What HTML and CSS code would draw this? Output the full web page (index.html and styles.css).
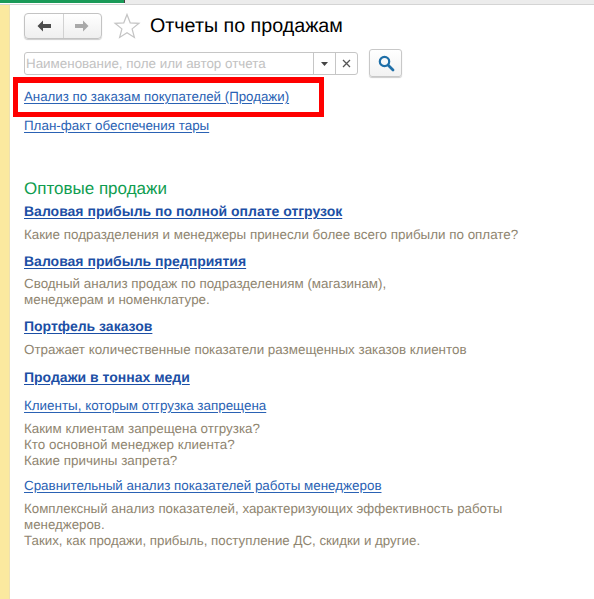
FILE: index.html
```html
<!DOCTYPE html>
<html lang="ru">
<head>
<meta charset="utf-8">
<title>Отчеты по продажам</title>
<link rel="stylesheet" href="styles.css">
</head>
<body>
<div class="topbar"><div class="tab-active"></div><div class="tab-rest"></div></div>
<div class="frame">
  <aside class="side"></aside>
  <main class="content">
    <header class="head">
      <div class="nav">
        <button class="nav-btn" aria-label="Назад"><svg width="16" height="14" viewBox="0 0 16 14"><path d="M7 1.500 1.500 7 7 12.500V9h8V5H7z" fill="#4d4d4d"/></svg></button>
        <button class="nav-btn" aria-label="Вперед"><svg width="16" height="14" viewBox="0 0 16 14"><path d="M9 1.500 14.500 7 9 12.500V9H1V5h8z" fill="#a9a9a9"/></svg></button>
      </div>
      <svg class="star" width="28" height="28" viewBox="0 0 28 28"><path d="M14 2.500 17.200 10.800 26 11.300 19.100 16.900 21.400 25.500 14 20.700 6.600 25.500 8.900 16.900 2 11.300 10.800 10.800z" fill="#fff" stroke="#c4c4c4" stroke-width="1.200"/></svg>
      <h1 class="title">Отчеты по продажам</h1>
    </header>
    <div class="search-row">
      <div class="search">
        <span class="placeholder">Наименование, поле или автор отчета</span>
        <span class="s-btn"><svg width="7" height="4" viewBox="0 0 7 4"><path d="M0 0h7L3.500 4z" fill="#444"/></svg></span>
        <span class="s-btn"><svg width="9" height="9" viewBox="0 0 9 9"><path d="M1 1l7 7M8 1 1 8" stroke="#555" stroke-width="1.300" fill="none"/></svg></span>
      </div>
      <button class="find" aria-label="Найти"><svg width="18" height="18" viewBox="0 0 18 18"><circle cx="7.500" cy="7.500" r="4.700" fill="none" stroke="#1f6fa8" stroke-width="2.200"/><path d="M11 11l5 5" stroke="#1f6fa8" stroke-width="2.800" stroke-linecap="round"/></svg></button>
    </div>
    <div class="top-links">
      <div class="marked"><a class="link first" href="#">Анализ по заказам покупателей (Продажи)</a></div>
      <a class="link plan" href="#">План-факт обеспечения тары</a>
    </div>
    <h2 class="group">Оптовые продажи</h2>
    <a class="link bold l1" href="#">Валовая прибыль по полной оплате отгрузок</a>
    <p class="desc d1">Какие подразделения и менеджеры принесли более всего прибыли по оплате?</p>
    <a class="link bold l2" href="#">Валовая прибыль предприятия</a>
    <p class="desc d2">Сводный анализ продаж по подразделениям (магазинам),<br>менеджерам и номенклатуре.</p>
    <a class="link bold l3" href="#">Портфель заказов</a>
    <p class="desc d3">Отражает количественные показатели размещенных заказов клиентов</p>
    <a class="link bold l4" href="#">Продажи в тоннах меди</a>
    <a class="link l5" href="#">Клиенты, которым отгрузка запрещена</a>
    <p class="desc d5">Каким клиентам запрещена отгрузка?<br>Кто основной менеджер клиента?<br>Какие причины запрета?</p>
    <a class="link l6" href="#">Сравнительный анализ показателей работы менеджеров</a>
    <p class="desc d6">Комплексный анализ показателей, характеризующих эффективность работы<br>менеджеров.<br>Таких, как продажи, прибыль, поступление ДС, скидки и другие.</p>
  </main>
</div>
</body>
</html>
```
FILE: styles.css
```css
* { box-sizing: border-box; }
html, body { margin: 0; height: 100%; overflow: hidden; background: #fff; }
body { width: 594px; height: 599px; font-family: "Liberation Sans", Arial, sans-serif; font-size: 13.4px; line-height: 16px; display: flex; flex-direction: column; text-rendering: geometricPrecision; }
.topbar { height: 5px; display: flex; flex: none; background: #fff; border-bottom: 1px solid #d4d4d4; }
.tab-active { width: 125px; height: 3px; background: #1a9a58; border-right: 1px solid #444; }
.tab-rest { flex: 1; height: 4px; background: #ececec; }
.frame { flex: 1; display: flex; min-height: 0; }
.side { width: 10px; flex: none; background: #fbe99f; border-right: 1px solid #eee1b0; }
.content { flex: 1; padding: 7px 0 0 14px; display: flex; flex-direction: column; align-items: flex-start; }
.head { display: flex; align-items: center; height: 28px; }
.nav { display: flex; width: 78px; height: 26px; border: 1px solid #c3c3c3; border-radius: 4px; background: linear-gradient(#fff, #efefef); box-shadow: 0 1px 1px #ccc; }
.nav-btn { flex: 1; border: 0; padding: 0; background: none; display: flex; align-items: center; justify-content: center; }
.nav-btn + .nav-btn { border-left: 1px solid #d2d2d2; }
.star { margin-left: 11px; flex: none; }
.title { margin: 0 0 0 9px; font-size: 19.7px; font-weight: 400; color: #000; line-height: 24px; }
.search-row { display: flex; align-items: flex-start; margin-top: 12px; }
.search { width: 334px; height: 23px; border: 1px solid #c6c6c6; border-radius: 3px; display: flex; align-items: center; }
.placeholder { flex: 1; padding-left: 1px; color: #c2c2c2; font-size: 13.4px; white-space: nowrap; }
.s-btn { width: 22px; height: 21px; flex: none; border-left: 1px solid #c6c6c6; display: flex; align-items: center; justify-content: center; }
.find { width: 33px; height: 28px; margin: -3px 0 0 11px; padding: 0; border: 1px solid #c8c8c8; border-radius: 3px; background: linear-gradient(#fff, #f2f2f2); box-shadow: 0 1px 1px #ccc; display: flex; align-items: center; justify-content: center; }
.top-links { display: flex; flex-direction: column; align-items: flex-start; }
.marked { margin-left: -11px; width: 311px; height: 40px; border: 5px solid #f00; border-top-width: 6px; padding: 6px 0 0 6px; }
.link { color: #2a62b4; text-decoration: underline; text-underline-offset: 2px; font-size: 13.4px; line-height: 16px; white-space: nowrap; }
.first { font-size: 13.3px; }
.plan { margin-top: 1px; }
.bold { font-weight: 700; font-size: 14px; color: #1c4fa5; }
.group { margin: 45px 0 0; font-size: 17px; line-height: 20px; font-weight: 400; color: #0f9d50; }
.desc { margin: 0; color: #8f8570; font-size: 13.4px; line-height: 16px; white-space: nowrap; }
.l1 { margin-top: 4px; }
.d1 { margin-top: 8px; }
.l2 { margin-top: 10px; }
.d2 { margin-top: 7px; }
.l3 { margin-top: 10px; }
.d3 { margin-top: 8px; }
.l4 { margin-top: 11px; }
.l5 { margin-top: 13px; }
.d5 { margin-top: 7px; }
.l6 { margin-top: 9px; }
.d6 { margin-top: 7px; font-size: 13.3px; }
```
